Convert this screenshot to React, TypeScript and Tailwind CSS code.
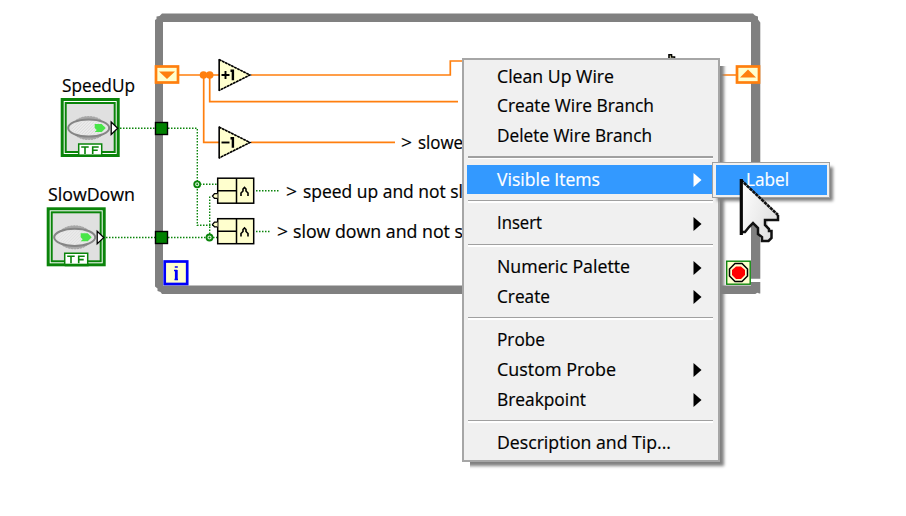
import React from "react";

const G = "#0a840a";
const O = "#ff7f0e";

type Entry = { label: string; sub?: boolean; active?: boolean; fit: string } | null;

const entries: Entry[] = [
  { label: "Clean Up Wire", fit: "w-[117px]" },
  { label: "Create Wire Branch", fit: "w-[157px]" },
  { label: "Delete Wire Branch", fit: "w-[155px]" },
  null,
  { label: "Visible Items", sub: true, active: true, fit: "w-[103px]" },
  null,
  { label: "Insert", sub: true, fit: "w-[45px]" },
  null,
  { label: "Numeric Palette", sub: true, fit: "w-[133px]" },
  { label: "Create", sub: true, fit: "w-[53px]" },
  null,
  { label: "Probe", fit: "w-[48px]" },
  { label: "Custom Probe", sub: true, fit: "w-[119px]" },
  { label: "Breakpoint", sub: true, fit: "w-[89px]" },
  null,
  { label: "Description and Tip...", fit: "w-[174px]" },
];

/* One line of text drawn to a fixed advance width. */
function FitText({ text, width }: { text: string; width: string }) {
  return (
    <svg className={`h-[28px] shrink-0 overflow-visible ${width}`} aria-label={text}>
      <text x="0" y="20" textLength="100%" lengthAdjust="spacingAndGlyphs" fill="currentColor" stroke="currentColor" strokeWidth=".2">
        {text}
      </text>
    </svg>
  );
}

function Toggle({ x, y }: { x: number; y: number }) {
  return (
    <g transform={`translate(${x} ${y})`}>
      <rect x="1.5" y="1.5" width="56" height="56" fill="#fff" stroke={G} strokeWidth="3" />
      <rect x="5" y="5" width="49" height="49" fill="#e0e0e0" stroke={G} strokeWidth="2" />
      <ellipse cx="28" cy="30" rx="17" ry="11.5" fill="#a9a9a9" stroke="#a2a2a2" strokeDasharray="2 1" />
      <ellipse cx="28" cy="30" rx="20.5" ry="8.6" fill="#e5e5e5" stroke="#858585" strokeWidth="2" />
      <ellipse cx="28" cy="30" rx="17" ry="6.8" fill="url(#knob)" />
      <path d="M34 26h7l4 4-4 4h-7l2-2-2-2z" fill="#48e548" />
      <path d="M50.5 24v12.5l6.5-6.2z" fill="#fff" stroke="#000" strokeWidth="1.3" />
      <path d="M18 57V46h23v11" fill="#fff" stroke={G} strokeWidth="1.5" />
      <path d="M18 57.7h24" stroke={G} strokeWidth="2.6" />
      <path d="M20.5 49h7.5M24.3 49v7M32 56v-7h6M32 52.3h5" fill="none" stroke={G} strokeWidth="1.6" />
    </g>
  );
}

function AndGate({ x, y, inverted }: { x: number; y: number; inverted: number }) {
  return (
    <g transform={`translate(${x} ${y})`}>
      <rect x=".7" y=".7" width="36" height="25" fill="#ffffce" stroke="#000" strokeWidth="1.5" />
      <path d="M19.5 1v25M1 13.2h18.5" stroke="#000" strokeWidth="1.5" />
      <path d="M24 18.5v-3l2-2v-2l1.500-1.500 1.500 1.500v2l2 2v3" fill="none" stroke="#000" strokeWidth="1.6" />
      <path d={`M.5 ${inverted - 2.4}h-3l-2 2.4 2 2.4h3`} fill="#ffffce" stroke="#000" strokeWidth="1.3" />
    </g>
  );
}

function Triangle({ y, sign }: { y: number; sign: string }) {
  return (
    <g transform={`translate(218 ${y})`}>
      <path d="M1.2 1v31L32 16.5z" fill="#ffffce" stroke="#000" strokeWidth=".6" />
      <path d="M1.2 .5v32" stroke="#000" strokeWidth="1.5" />
      <path d="M1 1l31 15.5L1 32" fill="none" stroke="#000" strokeWidth="1.6" strokeDasharray="2.6 .8" />
      <path d={sign} fill="none" stroke="#000" strokeWidth="1.9" />
      <path d="M12.5 12.2h2.400v9.500" fill="none" stroke="#000" strokeWidth="2.4" />
    </g>
  );
}

function Diagram() {
  return (
    <svg className="absolute inset-0" width="906" height="516" viewBox="0 0 906 516">
      <defs>
        <pattern id="knob" width="3" height="3" patternUnits="userSpaceOnUse">
          <rect width="3" height="3" fill="#ededed" />
          <path d="M0 3l3-3" stroke="#cecece" strokeWidth=".7" />
        </pattern>
      </defs>
      <path fillRule="evenodd" fill="#808080" d="M162 13.5h591l2 2 3 1v3l2.3 3v256.200H751V22H163v263.500H751V282h9.300v11.500h-1l-2-.8-2 1.300H162l-1.500-2-3-1v-2.500l-2.500-2V20l1.500-1v-2.500l3-.5z" />
      <path d="M178 75H219M251 75H450.300V61H470M203.700 75V142.300H219M209.700 75V101.700H458M251 142.300H395M718 75H737" fill="none" stroke={O} strokeWidth="1.7" />
      <circle cx="203.500" cy="75" r="3.8" fill={O} />
      <circle cx="209.700" cy="75" r="3.8" fill={O} />
      <g>
        <rect x="156" y="66.500" width="22" height="16" fill="#ffffce" stroke={O} strokeWidth="2.700" />
        <path d="M159 71.500h16l-8 7.500z" fill={O} />
        <rect x="737" y="66.500" width="22" height="16" fill="#ffffce" stroke={O} strokeWidth="2.700" />
        <path d="M740 77.500h16l-8-8z" fill={O} />
      </g>
      <g fill="none" stroke={G} strokeWidth="1.4" strokeDasharray="1.5 1.5">
        <path d="M120 128.300H156M168 128.300H197.300V225.300H213M197 184.300H217M106 237.500H156M168 237.500H217M209.700 196.500V237M256 190.700H280M256 231.500H271" />
      </g>
      <g fill="#ddf3dd" stroke={G} strokeWidth="1.8">
        <circle cx="197.200" cy="184.300" r="3" />
        <circle cx="209.500" cy="237.500" r="3" />
      </g>
      <circle cx="197.200" cy="184.300" r="1" fill={G} />
      <circle cx="209.500" cy="237.500" r="1" fill={G} />
      <rect x="155.500" y="122.500" width="12" height="12" fill="#008000" stroke="#000" strokeWidth="1.4" />
      <rect x="155.500" y="231.500" width="12" height="12" fill="#008000" stroke="#000" strokeWidth="1.4" />
      <Toggle x={60.700} y={98} />
      <Toggle x={46.700} y={207.300} />
      <Triangle y={58.500} sign="M3.500 16.500h8M7.500 12.500v8" />
      <Triangle y={126} sign="M3.500 16.500h8" />
      <AndGate x={217} y={177.500} inverted={18.500} />
      <AndGate x={217} y={218} inverted={6.500} />
      <rect x="164.700" y="261.500" width="22.500" height="22.500" fill="#ffffce" stroke="#0000fa" strokeWidth="2.700" />
      <path d="M174 270.500h2.300v9M174.500 279.500h3.500M174.800 267h3" fill="none" stroke="#0000fa" strokeWidth="1.600" />
      <path d="M176.300 270v9.500" stroke="#0000fa" strokeWidth="2.800" />
      <rect x="726.700" y="261.200" width="23.500" height="23" fill="#ffffce" stroke={G} strokeWidth="1.4" />
      <path d="M735 263.500h7l5.500 5.500v7l-5.500 5.500h-7l-5.500-5.500v-7z" fill="#ffffce" stroke="#000" strokeWidth="1.5" />
      <path d="M736 266.500h5l4 3.500v5l-4 4h-5l-4-4v-5z" fill="#f00" />
      <path d="M669 60V55h3l4 4v3h-7z" fill="#ffffce" />
      <path d="M669 60V54.700h2.500v2.300h3v2.500h3" fill="none" stroke="#000" strokeWidth="1.6" />
    </svg>
  );
}

export default function App() {
  return (
    <main className="relative h-[516px] w-[906px] overflow-hidden bg-white font-['Open_Sans',sans-serif] text-[18.5px] leading-[28px] text-black">
      <Diagram />
      <div className="absolute left-[62px] top-[71.5px] flex"><FitText text="SpeedUp" width="w-[73px]" /></div>
      <div className="absolute left-[48px] top-[180.5px] flex"><FitText text="SlowDown" width="w-[87px]" /></div>
      <div className="absolute left-[401px] top-[129px] flex gap-[6px]">
        <FitText text=">" width="w-[11px]" />
        <FitText text="slower" width="w-[52px]" />
      </div>
      <div className="absolute left-[286px] top-[177.5px] flex gap-[5.5px]">
        <FitText text=">" width="w-[11px]" />
        <FitText text="speed up and not slow" width="w-[184px]" />
      </div>
      <div className="absolute left-[276.5px] top-[218.3px] flex gap-[5.5px]">
        <FitText text=">" width="w-[11px]" />
        <FitText text="slow down and not s" width="w-[170px]" />
      </div>

      <nav className="absolute left-[462px] top-[58px] flex h-[404px] w-[258px] flex-col border-2 border-[#a6a6a6] bg-[#f0f0f0] pl-[3px] pr-[4px] pt-[2px]">
        <div className="absolute -inset-[2px] shadow-[4px_4px_3px_#808080] [clip-path:polygon(100%_8px,110%_8px,110%_110%,8px_110%,8px_100%,100%_100%)]" />
        {entries.map((e, i) =>
          e ? (
            <div key={i} className={`flex h-[29.6px] shrink-0 items-center justify-between pl-[30px] pr-[12px] ${e.active ? "bg-[#3399ff] text-white" : ""}`}>
              <FitText text={e.label} width={e.fit} />
              {e.sub && (
                <svg className="mt-px h-[14px] w-[9px]" viewBox="0 0 9 14"><path d="M.5 0v14L8.500 7z" fill="currentColor" /></svg>
              )}
            </div>
          ) : (
            <div key={i} className="flex h-[14.1px] shrink-0 flex-col px-px pt-[5.5px]">
              <div className="h-[1.5px] bg-[#a0a0a0]" />
              <div className="h-[1.5px] bg-white" />
            </div>
          )
        )}
      </nav>

      <div className="absolute left-[712px] top-[162px] flex h-[36px] w-[118px] border-[1.5px] border-[#a0a0a0] bg-[#f0f0f0] p-[2px] pl-[3px] shadow-[4px_4px_3px_-1px_#808080]">
        <div className="flex flex-1 items-center bg-[#3399ff] pl-[30px] text-white">
          <FitText text="Label" width="w-[43px]" />
        </div>
      </div>
      <svg className="absolute left-[738px] top-[178px]" width="44" height="68" viewBox="0 0 44 68">
        <defs>
          <linearGradient id="arrow" x2="1" y2=".5"><stop stopColor="#fff" /><stop offset="1" stopColor="#e0e0e0" /></linearGradient>
        </defs>
        <path d="M3 2v54h3l9-10 4 4v6l4 3v4h6l4-4v-7l-3-3v-6h11v-4z" fill="url(#arrow)" />
        <path d="M3 2L40 37" fill="none" stroke="#111" strokeWidth="2.600" strokeDasharray="3.400 .6" />
        <path d="M40 37v5H27v5l4 4v2h2.500v7l-3 3H24v-4l-4-3v-6l-5-5-4 4-4 5H3" fill="none" stroke="#111" strokeWidth="2.500" />
        <path d="M3.300 1v56" stroke="#080808" strokeWidth="3.200" />
      </svg>
    </main>
  );
}
